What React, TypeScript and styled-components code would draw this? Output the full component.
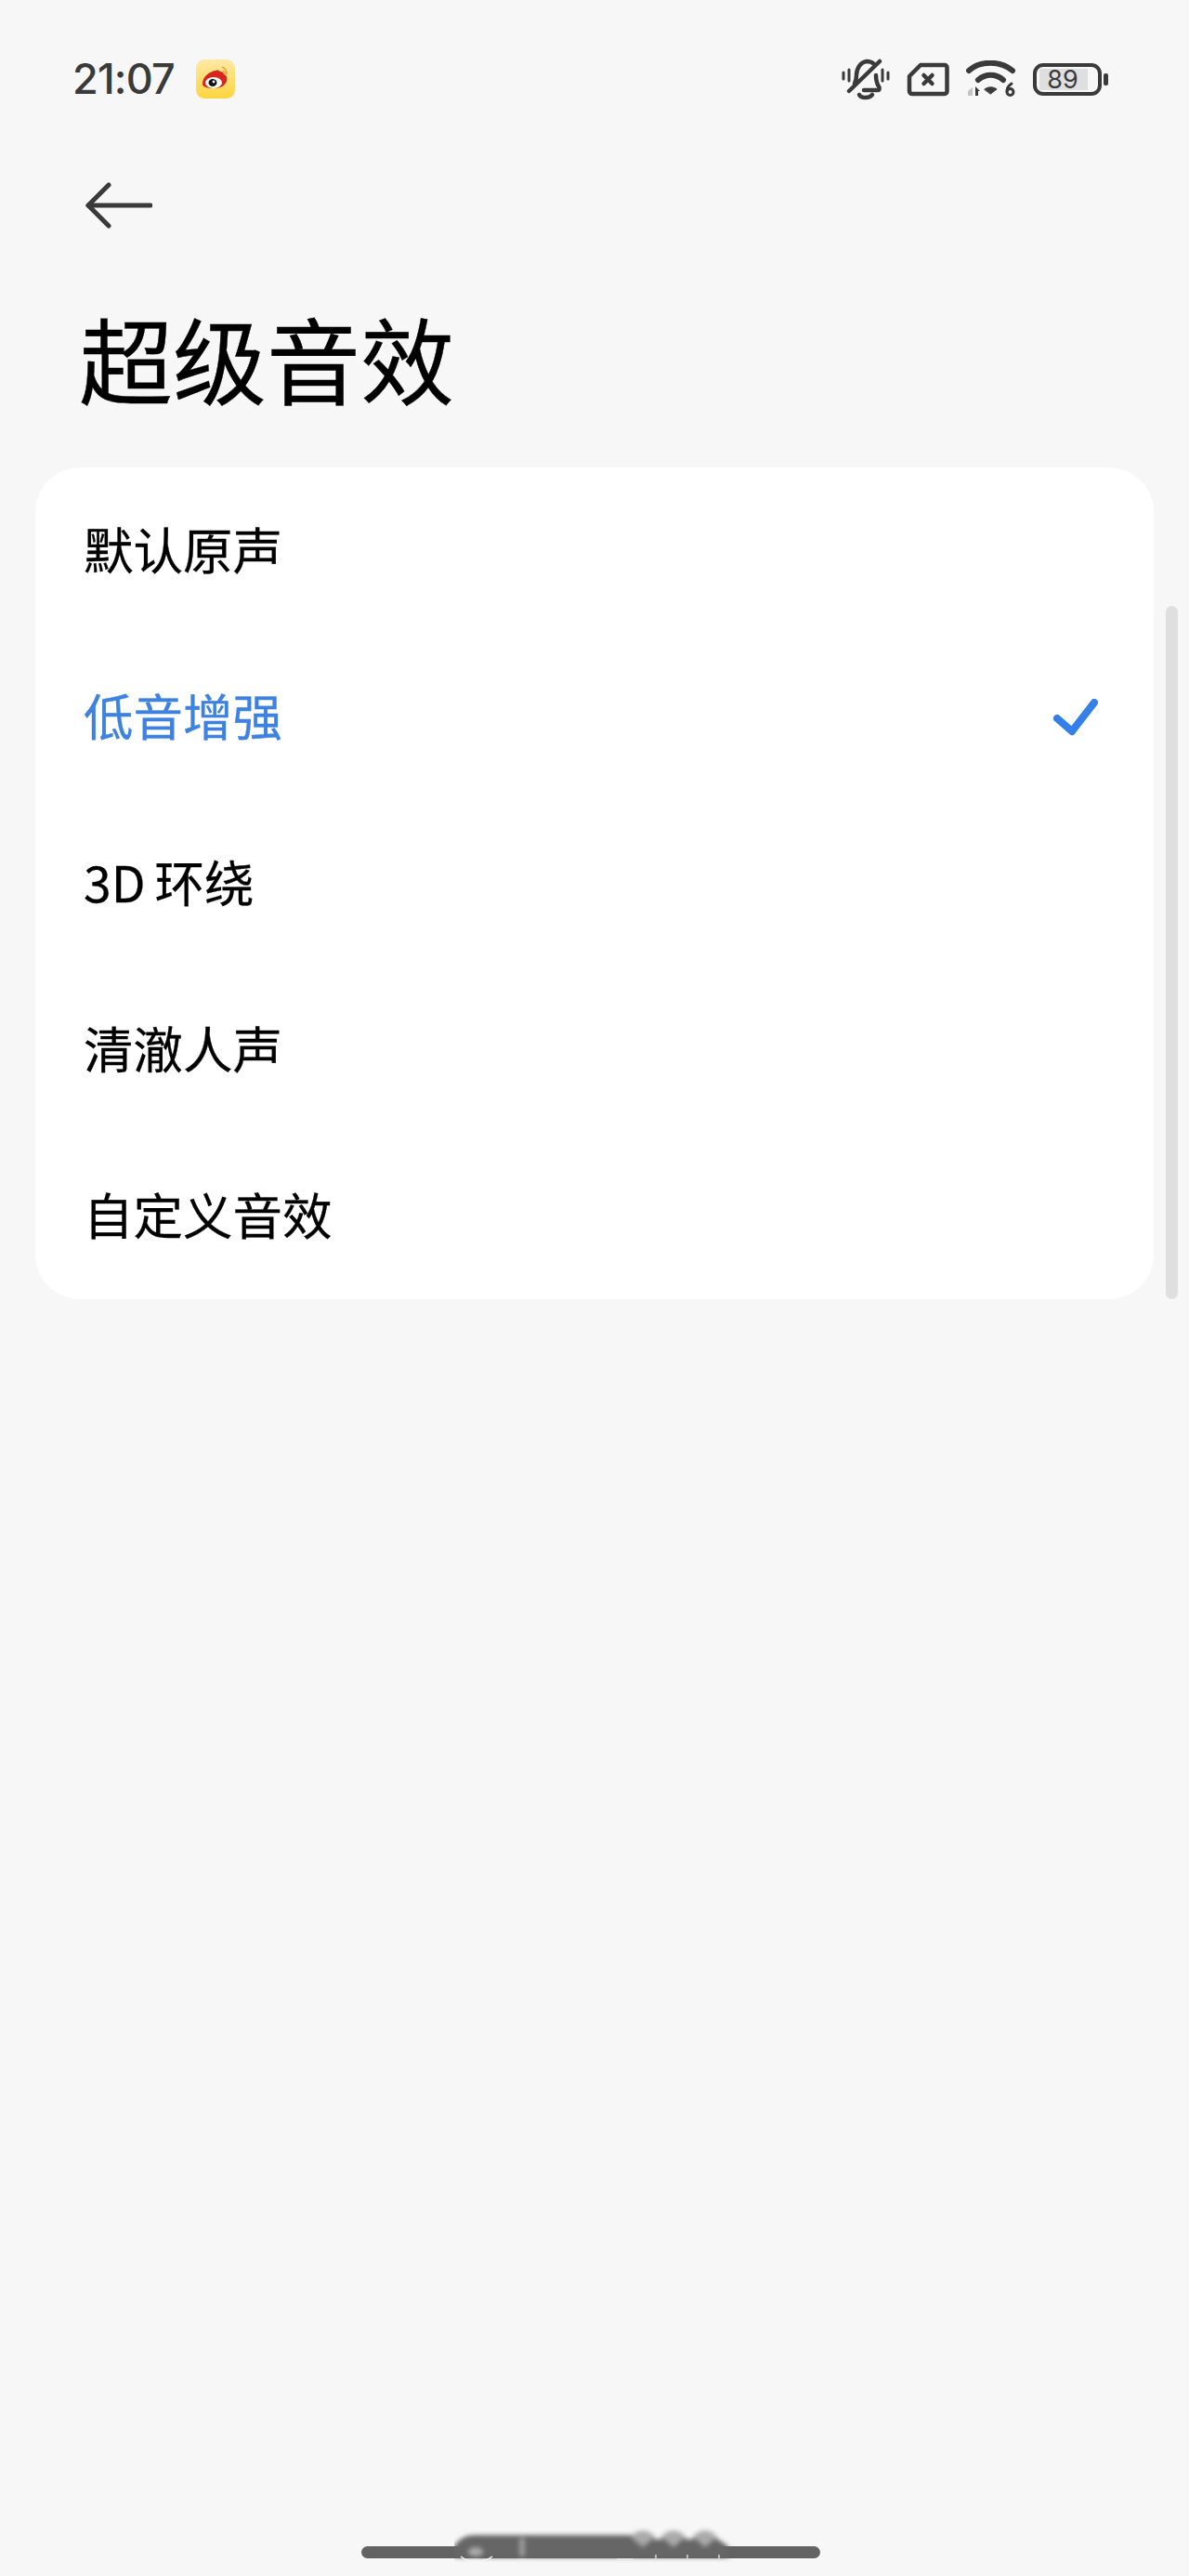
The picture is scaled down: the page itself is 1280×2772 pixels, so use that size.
import React from 'react'
import styled, {createGlobalStyle} from 'styled-components'

const GlobalStyle = createGlobalStyle`
  html, body {
    margin: 0;
    padding: 0;
    background: #f7f7f7;
  }
`

const Page = styled.div`
  position: relative;
  width: 1280px;
  height: 2772px;
  overflow: hidden;
  background: #f7f7f7;
  font-family: "Noto Sans CJK SC", "Noto Sans", sans-serif;
  color: #000;
`

const StatusBar = styled.div`
  display: flex;
  align-items: center;
  justify-content: space-between;
  height: 46px;
  padding: 62px 94px 0 78px;
`

const StatusLeft = styled.div`
  display: flex;
  align-items: center;
  gap: 23px;
`

const Time = styled.span`
  font-family: Inter, Roboto, sans-serif;
  font-size: 45px;
  font-weight: 500;
  line-height: 46px;
  color: #3a3a3a;
  letter-spacing: -0.8px;
`

const StatusIcons = styled.div`
  display: flex;
  align-items: center;
  gap: 18px;
`

const BatteryBox = styled.div`
  position: relative;
  box-sizing: border-box;
  display: flex;
  align-items: center;
  justify-content: center;
  width: 74px;
  height: 35px;
  border: 4px solid #3a3a3a;
  border-radius: 11px;
`

const BatteryFill = styled.div`
  position: absolute;
  left: 3px;
  top: 2px;
  bottom: 2px;
  width: 52px;
  background: #dfdfdf;
`

const BatteryText = styled.span`
  position: relative;
  left: -5px;
  font-family: Inter, Roboto, sans-serif;
  font-size: 27px;
  line-height: 27px;
  color: #3a3a3a;
`

const BatteryCap = styled.div`
  position: absolute;
  right: -11px;
  top: 7px;
  width: 5px;
  height: 13px;
  border-radius: 2px;
  background: #3a3a3a;
`

const BackRow = styled.div`
  display: flex;
  padding: 88px 0 0 92px;
`

const Title = styled.h1`
  margin: 0;
  padding: 63px 0 0 85px;
  font-size: 101px;
  line-height: 150px;
  font-weight: 400;
  letter-spacing: 0;
  color: #000;
  -webkit-text-stroke: 0.4px #000;
`

const Card = styled.div`
  margin: 44px 38px 0;
  background: #fff;
  border-radius: 48px;
  display: flex;
  flex-direction: column;
`

const Row = styled.div`
  display: flex;
  align-items: center;
  justify-content: space-between;
  height: 179px;
  padding: 0 60px 0 52px;
`

const Label = styled.span<{$active?: boolean}>`
  padding-bottom: 6px;
  font-size: 53.5px;
  line-height: 70px;
  word-spacing: -2px;
  -webkit-text-stroke: 0.3px currentColor;
  color: ${({$active}) => ($active ? '#3d82e0' : '#000')};
`

const Scrollbar = styled.div`
  position: absolute;
  left: 1255px;
  top: 652px;
  width: 13px;
  height: 746px;
  border-radius: 7px;
  background: #dfdfdf;
`

const HomeBar = styled.div`
  position: absolute;
  left: 389px;
  top: 2740px;
  width: 494px;
  height: 13px;
  border-radius: 7px;
  background: #636363;
`

const Smudge = styled.svg`
  position: absolute;
  left: 489px;
  top: 2715px;
`

const Bell = () => (
  <svg width="52" height="45" viewBox="0 0 52 45" fill="none" stroke="#3a3a3a" strokeWidth="4.5" strokeLinecap="round" strokeLinejoin="round">
    <path d="M14 27c1-2 2-5 2-9 0-7 4-14 11-15 3 0 6 1 8 3" />
    <path d="M37 18c0 5 1 9 3 12 1 1 1 4-1 4H24" />
    <path d="M8 35L41 3" />
    <path d="M19 39c2 4 11 4 14 0" />
    <path d="M2 15v7M8 12v12M44 12v12M50 15v7" strokeWidth="3" />
  </svg>
)

const SimX = () => (
  <svg width="46" height="37" viewBox="0 0 46 37" fill="none" stroke="#3a3a3a" strokeLinecap="round" strokeLinejoin="round">
    <path d="M15 3H41a2.500 2.500 0 0 1 2.500 2.500V31.500a2.500 2.500 0 0 1-2.500 2.500H6a3 3 0 0 1-3-3V15z" strokeWidth="4.500" />
    <path d="M18.500 14l9 9M27.500 14l-9 9" strokeWidth="4.500" />
  </svg>
)

const Wifi = () => (
  <svg width="54" height="40" viewBox="0 0 54 40" fill="none" strokeLinecap="round">
    <path d="M3 11C15 0 37 0 50 11" stroke="#3a3a3a" strokeWidth="6" />
    <path d="M13 21c8-7 19-7 27 0" stroke="#3a3a3a" strokeWidth="6" />
    <path d="M20 31c4-3 9-3 13 0l-6.500 5z" fill="#3a3a3a" stroke="#3a3a3a" strokeWidth="1" />
    <path d="M2 33l5-4v9H2z" fill="#c4c4c4" />
    <path d="M10 38v-10l5 5h-2v5z" fill="#3a3a3a" />
    <circle cx="47.500" cy="34" r="3.500" stroke="#3a3a3a" strokeWidth="3" />
    <path d="M44 33c0-4 2-6 5-8" stroke="#3a3a3a" strokeWidth="3" />
  </svg>
)

const Weibo = () => (
  <svg width="42" height="42" viewBox="0 0 42 42">
    <defs>
      <linearGradient id="wb" x1="0" y1="0" x2="0" y2="1">
        <stop offset="0" stopColor="#fde9a6" />
        <stop offset="1" stopColor="#fdd53e" />
      </linearGradient>
    </defs>
    <rect width="42" height="42" rx="9" fill="url(#wb)" />
    <path d="M7 26c0-7 7-13 14-14 2-1 4 0 5 1 2 0 4 1 4 3 3 1 4 4 3 7-1 5-7 8-13 8-7 0-13-1-13-5z" fill="#d9261c" />
    <ellipse cx="19" cy="25" rx="9" ry="6" fill="#fff" />
    <ellipse cx="18" cy="25" rx="4.500" ry="4" fill="#111" />
    <circle cx="19" cy="24" r="1.400" fill="#fff" />
    <path d="M28 8c3 1 5 4 5 8M29 12c1 1 2 2 2 4" stroke="#e8a33c" strokeWidth="1.600" fill="none" />
  </svg>
)

const BackArrow = () => (
  <svg width="72" height="50" viewBox="0 0 72 50" fill="none" stroke="#3a3a3a" strokeWidth="5" strokeLinecap="round" strokeLinejoin="round">
    <path d="M70 25H3" />
    <path d="M25 3L3 25l22 22" />
  </svg>
)

const Check = () => (
  <svg width="48" height="40" viewBox="0 0 48 40" fill="none" stroke="#3580e8" strokeWidth="8" strokeLinecap="round" strokeLinejoin="round">
    <path d="M4 21l16 14L44 4" />
  </svg>
)

const options = ['默认原声', '低音增强', '3D 环绕', '清澈人声', '自定义音效']
const activeOption = '低音增强'

const App: React.FC = () => {
  return (
    <Page>
      <GlobalStyle />
      <StatusBar>
        <StatusLeft>
          <Time>21:07</Time>
          <Weibo />
        </StatusLeft>
        <StatusIcons>
          <Bell />
          <SimX />
          <Wifi />
          <BatteryBox>
            <BatteryFill />
            <BatteryText>89</BatteryText>
            <BatteryCap />
          </BatteryBox>
        </StatusIcons>
      </StatusBar>
      <BackRow>
        <BackArrow />
      </BackRow>
      <Title>超级音效</Title>
      <Card>
        {options.map((o) => (
          <Row key={o}>
            <Label $active={o === activeOption}>{o}</Label>
            {o === activeOption && <Check />}
          </Row>
        ))}
      </Card>
      <Scrollbar />
      <HomeBar />
      <Smudge width="310" height="50" viewBox="0 0 310 50">
        <g style={{filter: 'blur(2.5px)'}}>
          <path d="M0 25C5 17 12 13 22 13H188L203 12 219 18 236 12 253 18 270 12 285 18 295 25V37H0z" fill="#666" />
          <path d="M190 15c6-9 20-9 26 0l-13 11zM223 15c6-9 20-9 26 0l-13 11zM257 15c6-9 20-9 26 0l-13 11z" fill="#aaa" />
          <path d="M73 16v20" stroke="#a5a5a5" strokeWidth="5" />
          <ellipse cx="23" cy="31" rx="8" ry="5" fill="#aaa" />
        </g>
        <path d="M7 36c9 7 25 7 34 0" stroke="#f7f7f7" strokeWidth="1.500" fill="none" />
        <path d="M217 34v4M251 34v4M285 34v4" stroke="#d8d8d8" strokeWidth="1.500" />
        <path d="M175 39h18" stroke="#e8e8e8" strokeWidth="2" />
      </Smudge>
    </Page>
  )
}

export default App
